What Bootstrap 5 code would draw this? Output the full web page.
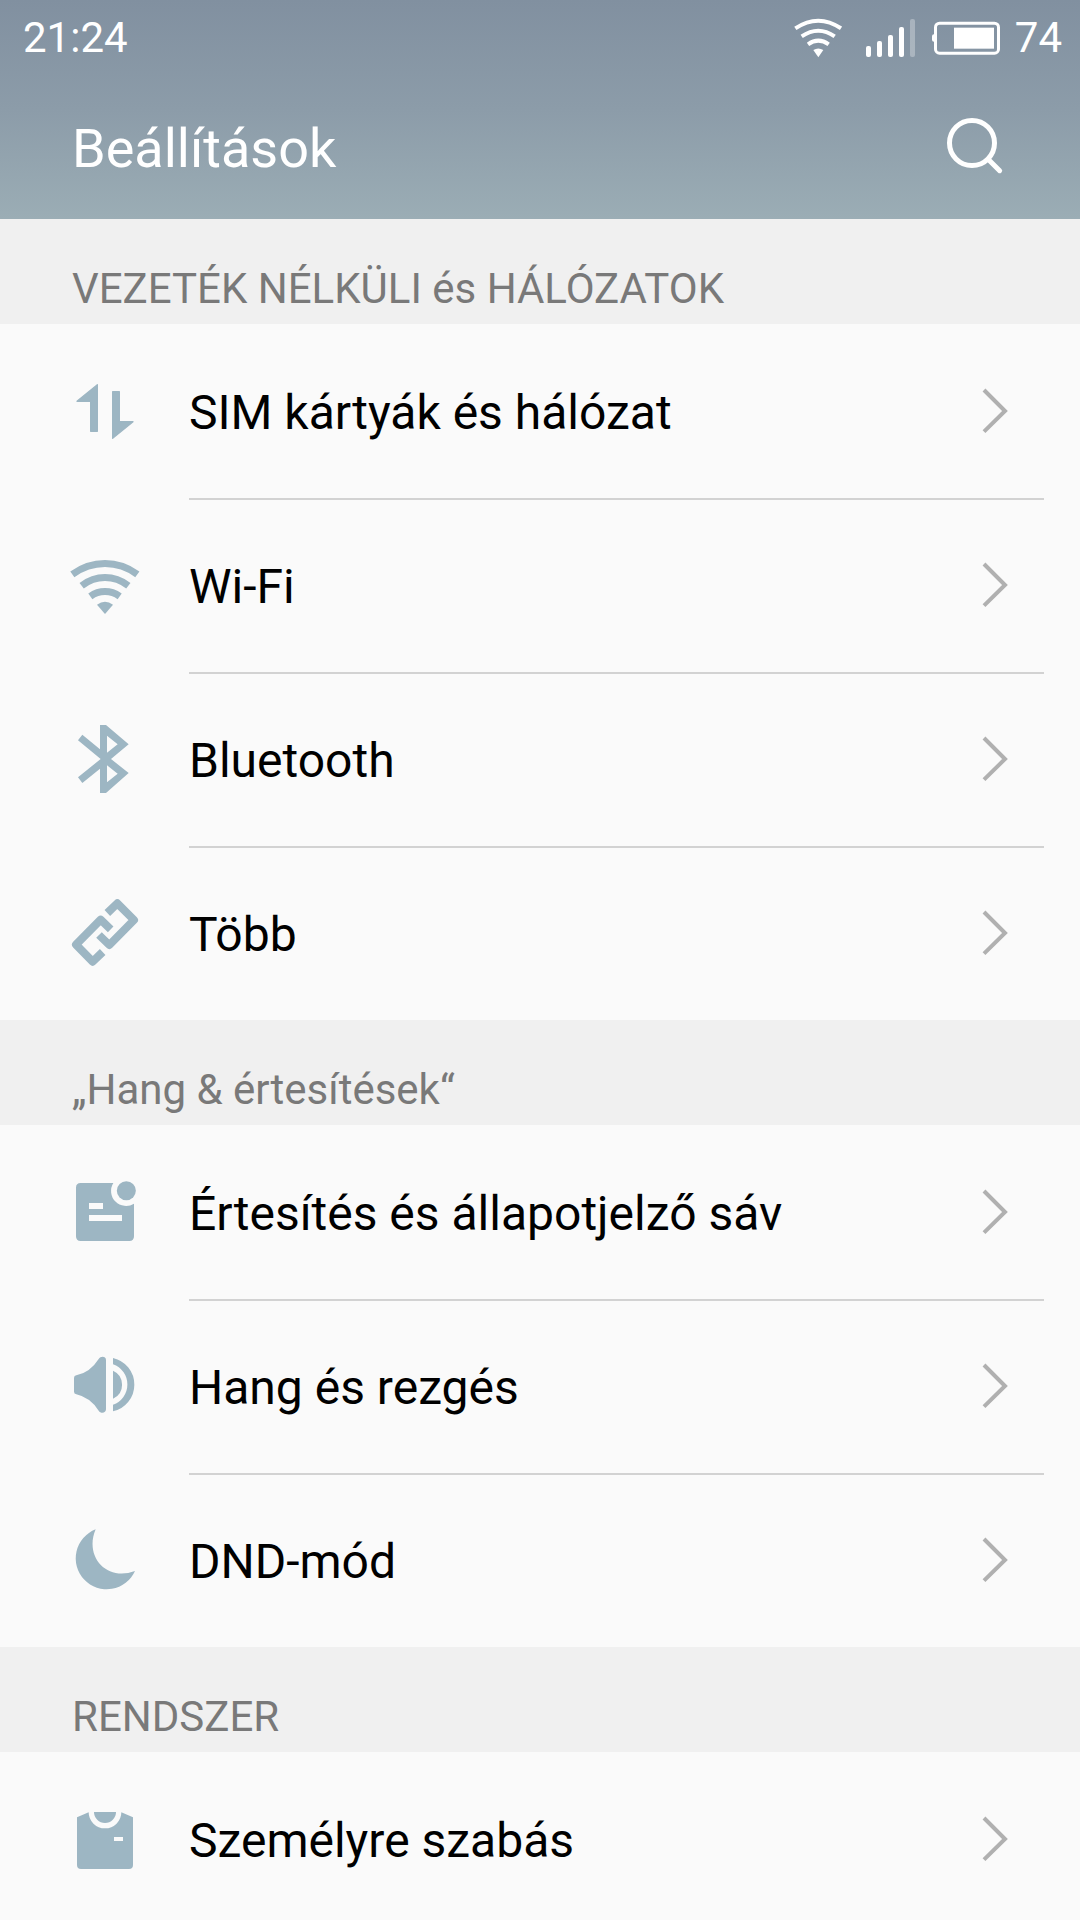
<!DOCTYPE html>
<html lang="hu">
<head>
<meta charset="utf-8">
<meta name="viewport" content="width=device-width, initial-scale=1">
<title>Beállítások</title>
<link href="https://cdn.jsdelivr.net/npm/bootstrap@5.3.0/dist/css/bootstrap.min.css" rel="stylesheet">
<style>
  body { font-family: Roboto, "Noto Sans", sans-serif; background: #fafafa; color: #000; overflow-x: hidden; }
  svg { display: block; flex: none; }
  .top-area { background: linear-gradient(#8190a0, #8c9ca9 50%, #9badb5); color: #fff; }
  .status-bar { height: 75px; padding: 0 18px 0 23px; font-size: 42px; line-height: 48px; }
  .signal { margin-left: 24px; }
  .battery { margin: 0 15px 0 17px; }
  .app-bar { height: 144px; padding: 4px 70px 0 72px; }
  .app-bar h1 { font-size: 54px; line-height: 64px; font-weight: 400; }
  .search-btn { color: #fff; }
  .group-title { height: 105px; padding: 0 72px 10px; font-size: 42px; line-height: 50px; font-weight: 400; color: #797979; background: #f0f0f0; }
  .setting { padding: 0 36px 0 69px; gap: 48px; color: #000; }
  .setting > svg { color: #9db6c3; }
  .setting-body { height: 174px; padding: 2px 30px 0 0; border-top: 2px solid #d2d2d2; font-size: 48px; line-height: 56px; }
  li:first-child .setting-body { border-top-color: transparent; }
  .chevron { color: #b0b0b0; }
</style>
<script src="https://cdn.jsdelivr.net/npm/bootstrap@5.3.0/dist/js/bootstrap.bundle.min.js"></script>
</head>
<body>
<svg width="0" height="0" class="position-absolute" aria-hidden="true">
  <symbol id="chevron" viewBox="144 69 108 180"><path d="M162 90 225 153 162 215" fill="none" stroke="currentColor" stroke-width="12"/></symbol>
</svg>
<header class="top-area">
  <div class="status-bar d-flex align-items-center">
    <span class="me-auto">21:24</span>
    <svg width="48" height="40" viewBox="102 52 144 120" fill="none" stroke="#fff" stroke-width="12" aria-label="Wi-Fi" role="img">
      <path d="M106 83Q175 37 243 83M125 107Q175 73 224 107M144 131Q175 109 206 131"/>
      <path d="M160 148Q175 139 190 148L175 170Z" fill="#fff" stroke="none"/>
    </svg>
    <svg class="signal" width="49" height="40" viewBox="318 54 147 120" fill="#fff" aria-label="Térerő" role="img">
      <rect x="318" y="138" width="15" height="33" rx="6"/><rect x="351" y="123" width="15" height="48" rx="6"/><rect x="384" y="105" width="15" height="66" rx="6"/><rect x="417" y="81" width="15" height="90" rx="6"/><rect x="450" y="57" width="15" height="114" rx="6" fill-opacity=".3"/>
    </svg>
    <svg class="battery" width="68" height="34" viewBox="516 61 204 102" aria-label="Akkumulátor" role="img">
      <rect x="526.500" y="67.500" width="189" height="90" rx="12" fill="none" stroke="#fff" stroke-width="9"/>
      <rect x="582" y="81" width="120" height="63" fill="#fff"/><path d="M525 101h-3q-6 0-6 6v10q0 6 6 6h3z" fill="#fff"/>
    </svg>
    <span>74</span>
  </div>
  <div class="app-bar d-flex align-items-center justify-content-between">
    <h1 class="m-0">Beállítások</h1>
    <button type="button" class="btn border-0 p-0 search-btn" aria-label="Keresés">
      <svg width="72" height="72" viewBox="534 342 216 216" fill="none" stroke="currentColor" stroke-width="15" stroke-linecap="round"><circle cx="636" cy="432" r="67.500"/><path d="M686 482 719 515"/></svg>
    </button>
  </div>
</header>
<main>
  <section>
    <h2 class="group-title d-flex align-items-end m-0">VEZETÉK NÉLKÜLI és HÁLÓZATOK</h2>
    <ul class="list-unstyled m-0">
      <li><a href="#sim" class="setting d-flex align-items-center text-decoration-none">
        <svg width="72" height="72" viewBox="57 45 216 216" fill="currentColor" stroke="currentColor" stroke-width="4" stroke-linejoin="round"><path d="M142 74V214H122V124H81ZM188 95H208V185H249L188 235Z"/></svg>
        <span class="setting-body d-flex align-items-center justify-content-between flex-fill">SIM kártyák és hálózat<svg class="chevron" width="36" height="60"><use href="#chevron"/></svg></span></a></li>
      <li><a href="#wifi" class="setting d-flex align-items-center text-decoration-none">
        <svg width="72" height="72" viewBox="57 567 216 216" fill="none" stroke="currentColor" stroke-width="21"><path d="M67 643Q112 610.500 165 610.500T262 643M95 677Q127 652.500 165 652.500T235 677M121 709Q141 694.500 165 694.500T209 709"/><path d="M141 734Q165 717 189 734L165 762Z" fill="currentColor" stroke="none"/></svg>
        <span class="setting-body d-flex align-items-center justify-content-between flex-fill">Wi-Fi<svg class="chevron" width="36" height="60"><use href="#chevron"/></svg></span></a></li>
      <li><a href="#bluetooth" class="setting d-flex align-items-center text-decoration-none">
        <svg width="72" height="72" viewBox="57 69 216 216" fill="currentColor"><path fill-rule="evenodd" d="M150 75H168L236 133 183 177 236 219 168 279H150V206L97 249 84 232 152 177 84 121 97 104 150 148ZM171 107V158L203 133ZM171 196V247L203 221Z"/></svg>
        <span class="setting-body d-flex align-items-center justify-content-between flex-fill">Bluetooth<svg class="chevron" width="36" height="60"><use href="#chevron"/></svg></span></a></li>
      <li><a href="#tobb" class="setting d-flex align-items-center text-decoration-none">
        <svg width="72" height="72" viewBox="57 591 216 216" fill="none" stroke="currentColor" stroke-width="24" stroke-linejoin="round"><path d="M172 639 202 610 252 660 178 735 147 705M182 688 152 659 78 734 128 785 158 756"/></svg>
        <span class="setting-body d-flex align-items-center justify-content-between flex-fill">Több<svg class="chevron" width="36" height="60"><use href="#chevron"/></svg></span></a></li>
    </ul>
  </section>
  <section>
    <h2 class="group-title d-flex align-items-end m-0">„Hang &amp; értesítések“</h2>
    <ul class="list-unstyled m-0">
      <li><a href="#ertesites" class="setting d-flex align-items-center text-decoration-none">
        <svg width="72" height="72" viewBox="57 48 216 216" fill="currentColor"><path fill-rule="evenodd" d="M92 69H190A45 45 0 0 0 252 131V229Q252 243 238 243H92Q78 243 78 229V83Q78 69 92 69ZM117 129V147H159V129ZM117 165V183H216V165Z"/><circle cx="229" cy="92" r="28.500"/></svg>
        <span class="setting-body d-flex align-items-center justify-content-between flex-fill">Értesítés és állapotjelző sáv<svg class="chevron" width="36" height="60"><use href="#chevron"/></svg></span></a></li>
      <li><a href="#hang" class="setting d-flex align-items-center text-decoration-none">
        <svg width="72" height="72" viewBox="57 570 216 216" fill="currentColor"><path d="M72 654Q72 647 79 646Q120 638 146 597C152 587 168 588 168 600V748C168 760 152 762 146 752Q120 712 79 703Q72 702 72 695ZM189 594A82 82 0 0 1 189 754V734A64 64 0 0 0 189 613ZM189 632A46 46 0 0 1 189 716Z"/></svg>
        <span class="setting-body d-flex align-items-center justify-content-between flex-fill">Hang és rezgés<svg class="chevron" width="36" height="60"><use href="#chevron"/></svg></span></a></li>
      <li><a href="#dnd" class="setting d-flex align-items-center text-decoration-none">
        <svg width="72" height="72" viewBox="57 72 216 216" fill="currentColor"><path d="M137 88A93 93 0 1 0 255 213C170 245 102 170 137 88Z"/></svg>
        <span class="setting-body d-flex align-items-center justify-content-between flex-fill">DND-mód<svg class="chevron" width="36" height="60"><use href="#chevron"/></svg></span></a></li>
    </ul>
  </section>
  <section>
    <h2 class="group-title d-flex align-items-end m-0">RENDSZER</h2>
    <ul class="list-unstyled m-0">
      <li><a href="#szemelyre" class="setting d-flex align-items-center text-decoration-none">
        <svg width="72" height="72" viewBox="57 69 216 216" fill="currentColor"><path fill-rule="evenodd" d="M116 97A49 48 0 0 0 214 97L249 112V255Q249 267 237 267H93Q81 267 81 255V112ZM192 171V183H219V171Z"/><path d="M132 96H198A33 33 0 0 1 132 96Z"/></svg>
        <span class="setting-body d-flex align-items-center justify-content-between flex-fill">Személyre szabás<svg class="chevron" width="36" height="60"><use href="#chevron"/></svg></span></a></li>
    </ul>
  </section>
</main>
</body>
</html>
